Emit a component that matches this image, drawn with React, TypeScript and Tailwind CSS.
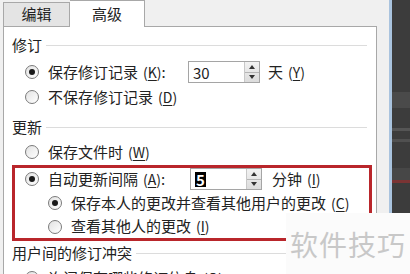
import React from "react";

const font = { fontFamily: '"Noto Sans CJK SC", "Noto Sans", sans-serif' };

const Radio: React.FC<{ checked?: boolean }> = ({ checked }) => (
    <span className="flex h-[14px] w-[14px] shrink-0 items-center justify-center rounded-full border border-[#7a7a7a] bg-gradient-to-br from-[#e2e2e2] to-white">
        {checked && <span className="h-[6px] w-[6px] rounded-full bg-[#1a1a1a]" />}
    </span>
);

const Key: React.FC<{ k: string }> = ({ k }) => (
    <span className="ml-[5px] text-[14px]">
        (<span className="underline underline-offset-2">{k}</span>)
    </span>
);

const Spin: React.FC<{ children: React.ReactNode }> = ({ children }) => (
    <div className="flex h-[22px] w-[72px] border border-[#a5a5a5] bg-white">
        <div className="flex flex-1 items-center pl-[4px] text-[15px] leading-none text-[#222]">{children}</div>
        <div className="flex w-[15px] flex-col border-l border-[#c8c8c8] bg-gradient-to-b from-[#f2f2f2] to-[#dcdcdc]">
            <div className="flex flex-1 items-center justify-center border-b border-[#b5b5b5]">
                <span className="h-0 w-0 border-x-[3px] border-b-[4px] border-x-transparent border-b-[#333]" />
            </div>
            <div className="flex flex-1 items-center justify-center">
                <span className="h-0 w-0 border-x-[3px] border-t-[4px] border-x-transparent border-t-[#333]" />
            </div>
        </div>
    </div>
);

const Header: React.FC<{ title: string; className?: string }> = ({ title, className }) => (
    <div className={`flex h-[24px] items-center ${className ?? ""}`}>
        <span className="text-[15px] text-[#222]">{title}</span>
        <div className="ml-[4px] h-px flex-1 bg-[#dcdcdc]" />
    </div>
);

const Row: React.FC<{ checked?: boolean; children: React.ReactNode; className?: string }> = ({
    checked,
    children,
    className,
}) => (
    <div className={`flex items-center gap-[9px] text-[15px] text-[#222] ${className ?? ""}`}>
        <Radio checked={checked} />
        {children}
    </div>
);

export default function App() {
    return (
        <div className="relative flex h-[274px] w-[410px] overflow-hidden bg-[#f0f0f0]" style={font}>
            <div className="flex w-[389px] flex-col pl-[3px] pr-[12px]">
                <div className="flex h-[26px] items-end">
                    <div className="flex h-[24px] w-[67px] items-center justify-center border border-b-0 border-[#a8a8a8] bg-[#e4e4e4] text-[15px] text-[#222]">
                        编辑
                    </div>
                    <div className="relative z-10 -mb-px flex h-[27px] w-[75px] items-center justify-center border border-b-0 border-l-0 border-[#a8a8a8] bg-white text-[15px] text-[#222]">
                        高级
                    </div>
                </div>
                <div className="flex flex-1 flex-col border border-[#a8a8a8] bg-white px-[8px] pt-[6px]">
                    <Header title="修订" className="pr-[1px]" />
                    <Row checked className="mt-[3px] h-[24px] pl-[13px]">
                        <span className="w-[131px]">
                            保存修订记录<Key k="K" />:
                        </span>
                        <Spin>30</Spin>
                        <span className="ml-[-1px]">
                            天<Key k="Y" />
                        </span>
                    </Row>
                    <Row className="mt-[1px] h-[24px] pl-[13px]">
                        <span>
                            不保存修订记录<Key k="D" />
                        </span>
                    </Row>
                    <Header title="更新" className="mt-[6px] pr-[1px]" />
                    <Row className="mt-[1px] h-[24px] pl-[13px]">
                        <span>
                            保存文件时<Key k="W" />
                        </span>
                    </Row>
                    <div className="-mr-[4px] mt-[1px] flex flex-col border-[3px] border-[#b9262b] pl-[10px]">
                        <Row checked className="h-[22px]">
                            <span className="w-[133px]">
                                自动更新间隔<Key k="A" />:
                            </span>
                            <Spin>
                                <span className="bg-black px-[1px] font-bold text-white">5</span>
                            </Spin>
                            <span className="ml-[1px]">
                                分钟<Key k="I" />
                            </span>
                        </Row>
                        <Row checked className="mt-[1px] h-[24px] pl-[23px]">
                            <span>
                                保存本人的更改并查看其他用户的更改<Key k="C" />
                            </span>
                        </Row>
                        <Row className="h-[23px] pl-[23px]">
                            <span>
                                查看其他人的更改<Key k="I" />
                            </span>
                        </Row>
                    </div>
                    <Header title="用户间的修订冲突" className="pr-[1px]" />
                    <Row checked className="mt-[1px] h-[24px] pl-[13px]">
                        <span>
                            询问保存哪些修订信息<Key k="O" />
                        </span>
                    </Row>
                </div>
            </div>
            <div className="w-[3px] bg-[#a9c3de]" />
            <div className="flex flex-1 flex-col bg-[#3c3c3c]">
                <div className="h-[92px]" />
                <div className="h-[16px] bg-[#4a4a4a]" />
                <div className="h-[20px]" />
                <div className="h-[3px] bg-[#555]" />
                <div className="h-[8px]" />
                <div className="h-[3px] bg-[#505050]" />
                <div className="h-[26px]" />
                <div className="h-[12px] bg-[#474747]" />
                <div className="h-[3px] bg-[#7a3434]" />
            </div>
            <div className="absolute left-[286px] top-[213px] flex h-[61px] w-[124px] items-center justify-center bg-[#fbfbfb]">
                <span className="text-[28px] tracking-[1px] text-[#c8c8c8]">软件技巧</span>
            </div>
        </div>
    );
}
